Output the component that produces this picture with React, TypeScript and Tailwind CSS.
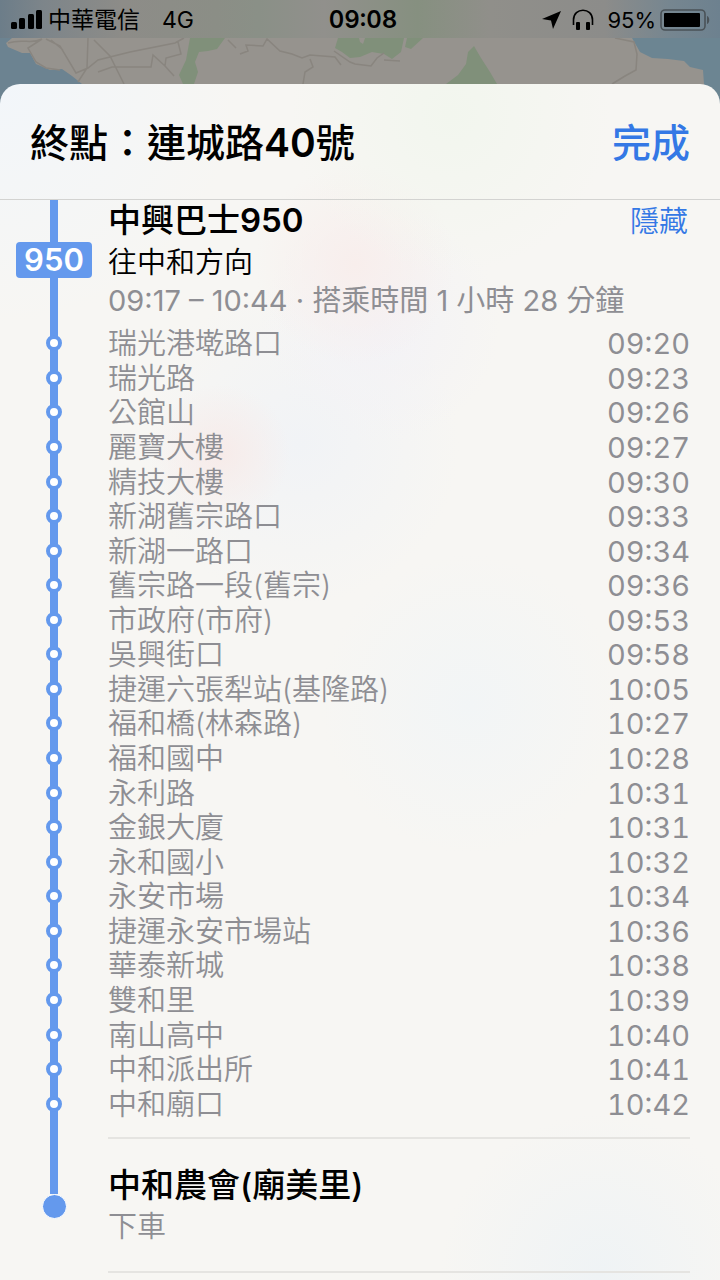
import { useState } from 'react';
import type { ReactNode } from 'react';

const stops = [
  { name: '瑞光港墘路口', time: '09:20' },
  { name: '瑞光路', time: '09:23' },
  { name: '公館山', time: '09:26' },
  { name: '麗寶大樓', time: '09:27' },
  { name: '精技大樓', time: '09:30' },
  { name: '新湖舊宗路口', time: '09:33' },
  { name: '新湖一路口', time: '09:34' },
  { name: '舊宗路一段(舊宗)', time: '09:36' },
  { name: '市政府(市府)', time: '09:53' },
  { name: '吳興街口', time: '09:58' },
  { name: '捷運六張犁站(基隆路)', time: '10:05' },
  { name: '福和橋(林森路)', time: '10:27' },
  { name: '福和國中', time: '10:28' },
  { name: '永利路', time: '10:31' },
  { name: '金銀大廈', time: '10:31' },
  { name: '永和國小', time: '10:32' },
  { name: '永安市場', time: '10:34' },
  { name: '捷運永安市場站', time: '10:36' },
  { name: '華泰新城', time: '10:38' },
  { name: '雙和里', time: '10:39' },
  { name: '南山高中', time: '10:40' },
  { name: '中和派出所', time: '10:41' },
  { name: '中和廟口', time: '10:42' },
];

function MapBackdrop() {
  return (
    <svg
      className="absolute inset-x-0 top-0 h-28 w-full"
      viewBox="0 0 720 112"
      preserveAspectRatio="none"
      aria-hidden="true"
    >
      <defs>
        <linearGradient id="bar" x1="0" x2="1" y1="0" y2="0">
          <stop offset="0" stopColor="#6c7d89" />
          <stop offset="0.06" stopColor="#7d858a" />
          <stop offset="0.17" stopColor="#8d8c88" />
          <stop offset="0.3" stopColor="#8b8e86" />
          <stop offset="0.36" stopColor="#8a9087" />
          <stop offset="0.45" stopColor="#91908c" />
          <stop offset="0.58" stopColor="#869080" />
          <stop offset="0.68" stopColor="#908f8a" />
          <stop offset="0.84" stopColor="#8c8c8a" />
          <stop offset="0.93" stopColor="#768690" />
          <stop offset="1" stopColor="#6d818f" />
        </linearGradient>
      </defs>
      <rect width="720" height="112" fill="#96938e" />
      <path d="M0 38H12L6 43L8 47L22 53H30L36 64L50 70L62 69L72 76L82 84V112H0Z" fill="#6c8391" />
      <path d="M632 38L640 52L652 58L668 59L684 61L690 67L703 70L704 84L710 112H720V38Z" fill="#6c8592" />
      <path d="M190 38H225L217 49L208 51L199 52L195 62L198 72L194 84H183L179 75L186 60Z" fill="#80907a" />
      <path d="M338 38H404L401 52L392 59L384 54L372 52L360 57L350 58L342 52L335 48Z" fill="#80907a" />
      <path d="M407 38H423L411 49L405 47Z" fill="#80907a" />
      <path d="M474 46L481 58L490 72L497 84H446L458 75L466 64L468 52Z" fill="#80907a" />
      <path d="M359 38H365L363 44L360 42Z" fill="#96938e" />
      <path
        d="M8 43C24 38 30 45 42 39L28 48L36 62L46 68L60 70M46 39L60 46L76 73L88 68L98 60L130 52L175 43L184 38M88 38L87 68L78 82M94 40L110 56L124 84M98 72L112 67H151L153 55L165 66L174 76M178 42L181 54L166 58L165 66M51 40L63 50M228 40L236 48"
        fill="none"
        stroke="#89857f"
        strokeWidth="1.5"
      />
      <path
        d="M240 54L248 51L246 45L263 46L267 39L280 51L292 54L302 58L310 55L335 57L341 65M310 59L313 67L305 72L303 84M334 51L350 62L355 64L371 66L377 58L384 53M384 60L400 61M615 38L634 42L637 54L636 70L625 76L612 84"
        fill="none"
        stroke="#89857f"
        strokeWidth="1.5"
      />
      <rect width="720" height="38" fill="url(#bar)" />
    </svg>
  );
}

function StatusBar() {
  return (
    <div className="relative grid h-10 grid-cols-[1fr_auto_1fr] items-center px-2.5 text-[23px] leading-10">
      <div className="flex items-center gap-1.5">
        <svg className="h-5 w-8" viewBox="0 0 32 20" aria-label="訊號">
          <rect x="1" y="12" width="6" height="7" rx="1.5" />
          <rect x="9" y="8" width="6" height="11" rx="1.5" />
          <rect x="18" y="4" width="6" height="15" rx="1.5" />
          <rect x="26" y="0" width="6" height="19" rx="1.5" />
        </svg>
        <span>中華電信</span>
        <span className="pl-4">4G</span>
      </div>
      <time className="pl-1.5 text-[24px] font-semibold tabular-nums">09:08</time>
      <div className="flex items-center justify-end">
        <svg className="mr-2.5 h-5 w-5" viewBox="0 0 20 20" aria-label="定位服務">
          <path d="M20 1L1 9L10 10.5L12 19Z" />
        </svg>
        <svg className="mr-3 h-[22px] w-6" viewBox="0 0 24 22" aria-label="耳機">
          <path d="M2.5 16V11C2.5 -2 21.5 -2 21.5 11V16" fill="none" stroke="black" strokeWidth="1.6" />
          <rect x="5" y="13" width="4" height="8" rx="1" />
          <rect x="15" y="13" width="4" height="8" rx="1" />
        </svg>
        <span className="text-[22px]">95%</span>
        <svg className="ml-1 h-6 w-[50px]" viewBox="0 0 50 24" aria-label="電池">
          <rect x="1" y="2" width="44" height="20" rx="4" fill="none" stroke="#4a5257" strokeWidth="1.6" />
          <rect x="4" y="5" width="36" height="14" rx="1" />
          <path d="M47 8C50 9 50 15 47 16Z" fill="#4a5257" />
        </svg>
      </div>
    </div>
  );
}

// Left column of every row. The blue line runs through it and children sit on top.
function Rail({ children }: { children?: ReactNode }) {
  return (
    <div className="relative flex w-[108px] shrink-0 justify-center">
      <div className="w-2 bg-[#6499ed]" />
      {children}
    </div>
  );
}

export default function App() {
  const [expanded, setExpanded] = useState(true);

  return (
    <div className="relative flex min-h-screen flex-col bg-[#96938e] font-['Inter','Noto_Sans_CJK_TC',sans-serif] text-black">
      <MapBackdrop />
      <StatusBar />

      <main className="relative mt-11 flex-1 rounded-t-[20px] bg-[#f7f6f3] bg-[radial-gradient(circle_at_0px_0px,#f2f6fa_0px,transparent_240px),radial-gradient(circle_at_450px_30px,#f2f6ee_0px,transparent_160px),radial-gradient(circle_at_355px_180px,#f8eeec_0px,transparent_100px),radial-gradient(circle_at_380px_240px,#f3f2f6_0px,transparent_120px),radial-gradient(circle_at_220px_370px,#f7ebe9_0px,transparent_70px),radial-gradient(circle_at_300px_360px,#f1f3f6_0px,transparent_160px),radial-gradient(circle_at_470px_620px,#f2f5f6_0px,transparent_150px),radial-gradient(circle_at_600px_1190px,#eff3f5_0px,transparent_160px)]">
        <header className="flex h-29 items-center justify-between border-b border-[#d3d3d1] px-[30px] pt-1 text-[39px]">
          <h1 className="font-medium">
            終點：連城路<span className="font-semibold">40</span>號
          </h1>
          <button type="button" className="font-medium text-[#3478e5]">
            完成
          </button>
        </header>

        <section className="flex">
          <Rail>
            <span className="absolute inset-x-4 top-[42px] rounded-sm bg-[#6499ed] text-center text-[31px] leading-9 font-semibold text-white">
              950
            </span>
          </Rail>
          <div className="flex-1 pr-8 pb-2">
            <div className="flex items-baseline justify-between leading-10">
              <h2 className="text-[33px] font-medium">
                中興巴士<span className="font-semibold">950</span>
              </h2>
              <button
                type="button"
                className="text-[29px] font-[350] text-[#3478e5]"
                onClick={() => setExpanded(!expanded)}
              >
                {expanded ? '隱藏' : '顯示'}
              </button>
            </div>
            <p className="text-[29px] leading-[42px] font-[350]">往中和方向</p>
            <p className="text-[29px] leading-[34px] text-[#8e8e93]">09:17 – 10:44 · 搭乘時間 1 小時 28 分鐘</p>
          </div>
        </section>

        {expanded && (
          <ol className="grid min-h-[795px] auto-rows-fr text-[29px] leading-8 text-[#8e8e93]">
            {stops.map((stop) => (
              <li key={stop.name} className="flex">
                <Rail>
                  <span className="absolute inset-0 m-auto size-4 rounded-full border-4 border-[#6499ed] bg-white" />
                </Rail>
                <div className="flex flex-1 items-center justify-between pt-0.5 pr-[30px]">
                  <span className="font-[350]">{stop.name}</span>
                  <time className="tabular-nums">{stop.time}</time>
                </div>
              </li>
            ))}
          </ol>
        )}

        <section className="flex">
          <div className="flex w-[108px] shrink-0 flex-col items-center">
            <div className="h-[73px] w-2 bg-[#6499ed]" />
            <span className="size-[25px] rounded-full border border-white bg-[#6499ed]" />
          </div>
          <div className="mt-4 mr-[30px] flex-1 border-y-2 border-[#e5e4e1] pt-6 pb-6">
            <h2 className="text-[33px] leading-[44px] font-medium">中和農會(廟美里)</h2>
            <p className="text-[29px] leading-10 font-[350] text-[#8e8e93]">下車</p>
          </div>
        </section>
      </main>
    </div>
  );
}
